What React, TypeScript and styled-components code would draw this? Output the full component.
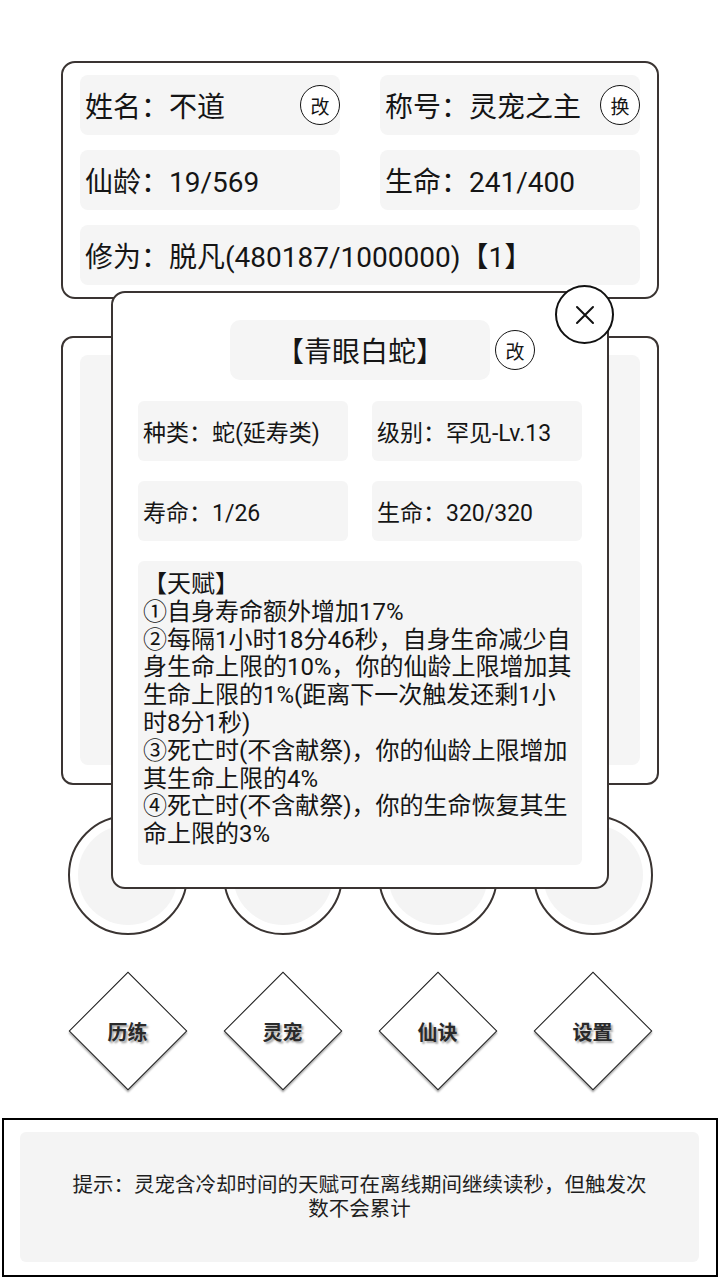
import styled, { createGlobalStyle } from "styled-components";

const GlobalStyle = createGlobalStyle`
  * {
    box-sizing: border-box;
  }
  body {
    margin: 0;
    background: #ffffff;
    font-family: Roboto, "Noto Sans CJK SC", "Noto Sans", sans-serif;
    color: #161616;
  }
`;

const talentLines = [
  "【天赋】",
  "①自身寿命额外增加17%",
  "②每隔1小时18分46秒，自身生命减少自",
  "身生命上限的10%，你的仙龄上限增加其",
  "生命上限的1%(距离下一次触发还剩1小",
  "时8分1秒)",
  "③死亡时(不含献祭)，你的仙龄上限增加",
  "其生命上限的4%",
  "④死亡时(不含献祭)，你的生命恢复其生",
  "命上限的3%",
];

const menu = ["历练", "灵宠", "仙诀", "设置"];

const App = () => {
  return (
    <Page>
      <GlobalStyle />
      <InfoCard>
        <InfoCell>
          <span>姓名：不道</span>
          <RoundButton>改</RoundButton>
        </InfoCell>
        <InfoCell>
          <span>称号：灵宠之主</span>
          <RoundButton>换</RoundButton>
        </InfoCell>
        <InfoCell>
          <span>仙龄：19/569</span>
        </InfoCell>
        <InfoCell>
          <span>生命：241/400</span>
        </InfoCell>
        <InfoCell $wide>
          <span>修为：脱凡(480187/1000000)【1】</span>
        </InfoCell>
      </InfoCard>

      <MainPanel>
        <MainInner />
      </MainPanel>

      <SlotRow>
        {menu.map((m) => (
          <Disc key={m}>
            <DiscInner />
          </Disc>
        ))}
      </SlotRow>

      <DiamondRow>
        {menu.map((m) => (
          <DiamondSlot key={m}>
            <Diamond />
            <DiamondLabel>{m}</DiamondLabel>
          </DiamondSlot>
        ))}
      </DiamondRow>

      <HintBox>
        <HintInner>提示：灵宠含冷却时间的天赋可在离线期间继续读秒，但触发次数不会累计</HintInner>
      </HintBox>

      <Modal>
        <CloseButton>
          <svg width="20" height="20" viewBox="0 0 20 20">
            <path
              d="M2 2 L18 18 M18 2 L2 18"
              stroke="#111"
              strokeWidth="2"
              strokeLinecap="round"
            />
          </svg>
        </CloseButton>
        <TitleRow>
          <TitleBox>【青眼白蛇】</TitleBox>
          <TitleButton>改</TitleButton>
        </TitleRow>
        <StatGrid>
          <StatCell>种类：蛇(延寿类)</StatCell>
          <StatCell>级别：罕见-Lv.13</StatCell>
          <StatCell>寿命：1/26</StatCell>
          <StatCell>生命：320/320</StatCell>
        </StatGrid>
        <TalentBox>
          {talentLines.map((line, i) => (
            <TalentLine key={i}>{line}</TalentLine>
          ))}
        </TalentBox>
      </Modal>
    </Page>
  );
};

export default App;

const Page = styled.div`
  position: relative;
  width: 720px;
  height: 1280px;
  padding-top: 61px;
  display: flex;
  flex-direction: column;
  align-items: center;
  overflow: hidden;
`;

const InfoCard = styled.div`
  width: 598px;
  border: 2px solid #3a3432;
  border-radius: 14px;
  padding: 12px 17px;
  display: grid;
  grid-template-columns: 1fr 1fr;
  gap: 15px 40px;
`;

const InfoCell = styled.div<{ $wide?: boolean }>`
  grid-column: ${({ $wide }) => ($wide ? "1 / span 2" : "auto")};
  height: 60px;
  background: #f5f5f5;
  border-radius: 8px;
  padding-left: 5px;
  display: flex;
  align-items: center;
  justify-content: space-between;
  font-size: 28px;
  color: #151515;
  white-space: nowrap;
`;

const RoundButton = styled.div`
  width: 40px;
  height: 40px;
  border-radius: 50%;
  border: 1.5px solid #151515;
  background: #ffffff;
  display: flex;
  align-items: center;
  justify-content: center;
  font-size: 19px;
  flex-shrink: 0;
`;

const MainPanel = styled.div`
  width: 598px;
  height: 449px;
  margin-top: 37px;
  border: 2px solid #3a3432;
  border-radius: 12px;
  padding: 17px 17px 18px;
  display: flex;
`;

const MainInner = styled.div`
  flex: 1;
  background: #f5f5f5;
  border-radius: 8px;
`;

const SlotRow = styled.div`
  margin-top: 30px;
  display: flex;
  gap: 35px;
`;

const Disc = styled.div`
  width: 120px;
  height: 120px;
  border-radius: 50%;
  border: 2px solid #3a3432;
  background: #ffffff;
  display: flex;
  align-items: center;
  justify-content: center;
`;

const DiscInner = styled.div`
  width: 100px;
  height: 100px;
  border-radius: 50%;
  background: #f4f4f4;
`;

const DiamondRow = styled.div`
  margin-top: 36px;
  display: flex;
  gap: 35px;
`;

const DiamondSlot = styled.div`
  width: 120px;
  height: 120px;
  display: grid;
  place-items: center;
  & > * {
    grid-area: 1 / 1;
  }
`;

const Diamond = styled.div`
  width: 84px;
  height: 84px;
  transform: rotate(45deg);
  border: 1.5px solid #1a1a1a;
  background: #ffffff;
  box-shadow: 1.5px 1.5px 2px rgba(0, 0, 0, 0.35);
`;

const DiamondLabel = styled.div`
  position: relative;
  z-index: 1;
  font-size: 20px;
  font-weight: 700;
  color: #2a2a2a;
  text-shadow: 2px 2px 2px rgba(0, 0, 0, 0.35);
`;

const HintBox = styled.div`
  width: 716px;
  height: 159px;
  margin-top: 27px;
  border: 2px solid #000000;
  padding: 12px 17px 13px 16px;
  display: flex;
`;

const HintInner = styled.div`
  flex: 1;
  background: #f4f4f4;
  border-radius: 6px;
  padding: 0 50px;
  display: flex;
  align-items: center;
  justify-content: center;
  text-align: center;
  font-size: 20.5px;
  line-height: 24px;
  color: #1e1e1e;
`;

const Modal = styled.div`
  position: absolute;
  top: 291px;
  left: 111px;
  width: 498px;
  background: #ffffff;
  border: 2px solid #3a3432;
  border-radius: 14px;
  padding: 27px 25px 22px;
  display: flex;
  flex-direction: column;
`;

const CloseButton = styled.div`
  position: absolute;
  top: -8px;
  right: -7px;
  width: 59px;
  height: 59px;
  border-radius: 50%;
  border: 2px solid #111111;
  background: #ffffff;
  display: flex;
  align-items: center;
  justify-content: center;
`;

const TitleRow = styled.div`
  display: grid;
  grid-template-columns: 1fr 260px 1fr;
  align-items: center;
  margin-bottom: 21px;
`;

const TitleBox = styled.div`
  grid-column: 2;
  height: 60px;
  background: #f5f5f5;
  border-radius: 10px;
  display: flex;
  align-items: center;
  justify-content: center;
  font-size: 28px;
  color: #151515;
`;

const TitleButton = styled(RoundButton)`
  grid-column: 3;
  justify-self: start;
  margin-left: 5px;
`;

const StatGrid = styled.div`
  display: grid;
  grid-template-columns: 1fr 1fr;
  gap: 20px 24px;
  margin-bottom: 20px;
`;

const StatCell = styled.div`
  height: 60px;
  background: #f5f5f5;
  border-radius: 6px;
  padding-left: 5px;
  display: flex;
  align-items: center;
  font-size: 23px;
  color: #151515;
  white-space: nowrap;
`;

const TalentBox = styled.div`
  background: #f5f5f5;
  border-radius: 6px;
  padding: 10px 5px 16px;
  font-size: 24px;
  line-height: 27.8px;
  color: #151515;
`;

const TalentLine = styled.div`
  white-space: nowrap;
`;
